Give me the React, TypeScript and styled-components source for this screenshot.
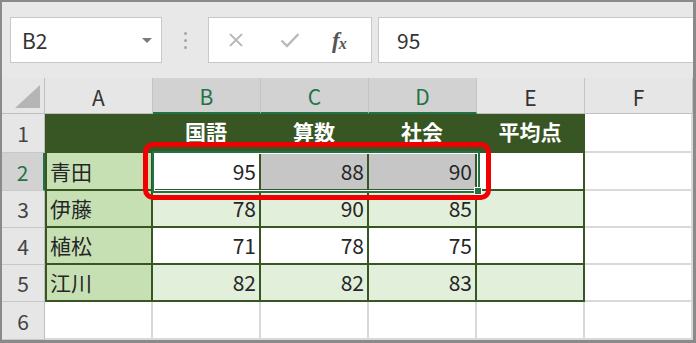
import React from "react";
import styled, { createGlobalStyle } from "styled-components";

const Global = createGlobalStyle`
  html, body { margin: 0; padding: 0; background: #ffffff; }
  * { box-sizing: border-box; }
`;

const FONT = `"Noto Sans CJK JP", "Noto Sans", "Liberation Sans", sans-serif`;
const DARK = "#375623";
const LIGHT_A = "#c6e0b4";
const BAND = "#e2efda";
const SEL_GREEN = "#217346";
const HEAD_BG = "#e6e6e6";
const HEAD_SEL = "#d2d2d2";
const GRID = "#d9d9d9";

const Frame = styled.div`
  width: 696px;
  height: 343px;
  border-style: solid;
  border-color: #8a8a8a;
  border-width: 2px 3px 3px 2px;
  display: flex;
  flex-direction: column;
  overflow: hidden;
  background: #ffffff;
  font-family: ${FONT};
`;

const Toolbar = styled.div`
  height: 76px;
  flex: none;
  display: flex;
  align-items: center;
  padding-left: 8px;
  background: #e8e8e8;
`;

const NameBox = styled.div`
  width: 152px;
  height: 46px;
  background: #fff;
  border: 1px solid #c8c8c8;
  display: flex;
  align-items: center;
  justify-content: space-between;
  padding: 0 9px 0 11px;
  font-size: 21px;
  color: #333;
`;

const DropArrow = styled.span`
  width: 0;
  height: 0;
  border-left: 5px solid transparent;
  border-right: 5px solid transparent;
  border-top: 5px solid #7a7a7a;
`;

const Dots = styled.div`
  display: flex;
  flex-direction: column;
  gap: 4px;
  margin: 0 21px 0 22px;
  span {
    width: 3px;
    height: 3px;
    border-radius: 50%;
    background: #a6a6a6;
  }
`;

const FuncBox = styled.div`
  width: 164px;
  height: 46px;
  background: #fff;
  border: 1px solid #c8c8c8;
  display: flex;
  align-items: center;
  padding-left: 19px;
`;

const IconSlot = styled.div<{ $w: number }>`
  width: ${(p) => p.$w}px;
  display: flex;
  align-items: center;
  justify-content: flex-start;
`;

const Fx = styled.span`
  font-family: "Liberation Serif", "DejaVu Serif", serif;
  font-style: italic;
  font-weight: bold;
  font-size: 23px;
  line-height: 1;
  color: #555;
  letter-spacing: -1px;
  sub {
    font-size: 16px;
    vertical-align: -1px;
  }
`;

const FormulaInput = styled.div`
  flex: 1;
  height: 46px;
  margin-left: 6px;
  background: #fff;
  border: 1px solid #c8c8c8;
  border-right: none;
  display: flex;
  align-items: center;
  padding-left: 18px;
  font-size: 21px;
  color: #333;
`;

const Sheet = styled.div`
  position: relative;
  flex: 1;
  display: grid;
  grid-template-columns: 43px repeat(6, 108px);
  grid-template-rows: 36px 39px 38px 37px 37px 37px 38px;
`;

const Corner = styled.div`
  background: ${HEAD_BG};
  border-right: 1px solid #bfbfbf;
  border-bottom: 1px solid #bfbfbf;
  position: relative;
  svg { position: absolute; left: 0; top: 0; }
`;

const ColHead = styled.div<{ $sel?: boolean }>`
  background: ${(p) => (p.$sel ? HEAD_SEL : HEAD_BG)};
  color: ${(p) => (p.$sel ? SEL_GREEN : "#333")};
  border-right: 1px solid #c4c4c4;
  border-bottom: ${(p) => (p.$sel ? `2px solid ${SEL_GREEN}` : "1px solid #bfbfbf")};
  display: flex;
  align-items: center;
  justify-content: center;
  font-size: 21px;
  padding-top: 2px;
`;

const RowHead = styled.div<{ $sel?: boolean }>`
  background: ${(p) => (p.$sel ? HEAD_SEL : HEAD_BG)};
  color: ${(p) => (p.$sel ? SEL_GREEN : "#444")};
  border-right: ${(p) => (p.$sel ? `2px solid ${SEL_GREEN}` : "1px solid #bfbfbf")};
  border-bottom: 1px solid #c8c8c8;
  display: flex;
  align-items: center;
  justify-content: center;
  font-size: 21px;
`;

type CellProps = {
  $bg?: string;
  $align?: "left" | "right" | "center";
  $table?: boolean;
  $leftEdge?: boolean;
  $head?: boolean;
};

const Cell = styled.div<CellProps>`
  background: ${(p) => p.$bg || "#fff"};
  border-right: 2px solid ${(p) => (p.$table ? DARK : GRID)};
  border-bottom: 2px solid ${(p) => (p.$table ? DARK : GRID)};
  border-left: ${(p) => (p.$leftEdge ? `2px solid ${DARK}` : "none")};
  display: flex;
  align-items: center;
  justify-content: ${(p) =>
    p.$align === "right" ? "flex-end" : p.$align === "center" ? "center" : "flex-start"};
  padding: ${(p) => (p.$head ? "0 3px 2px 3px" : "0 3px")};
  font-size: 21px;
  line-height: 1;
  color: ${(p) => (p.$head ? "#fff" : "#262626")};
  font-weight: ${(p) => (p.$head ? 700 : 400)};
`;

const Selection = styled.div`
  position: absolute;
  left: 150px;
  top: 73px;
  width: 328px;
  height: 42px;
  border: 2px solid ${SEL_GREEN};
  box-shadow: inset 0 0 0 1px #fff;
  pointer-events: none;
`;

const FillHandle = styled.div`
  position: absolute;
  right: -4px;
  bottom: -4px;
  width: 8px;
  height: 8px;
  background: ${SEL_GREEN};
  border: 1px solid #fff;
`;

const Callout = styled.div`
  position: absolute;
  left: 141px;
  top: 64px;
  width: 348px;
  height: 58px;
  border: 5px solid #f00000;
  border-radius: 10px;
  pointer-events: none;
`;

const cols = ["A", "B", "C", "D", "E", "F"];
const heads = ["", "国語", "算数", "社会", "平均点"];
const data: [string, number, number, number][] = [
  ["青田", 95, 88, 90],
  ["伊藤", 78, 90, 85],
  ["植松", 71, 78, 75],
  ["江川", 82, 82, 83],
];

export default function App() {
  return (
    <>
      <Global />
      <Frame>
        <Toolbar>
          <NameBox>
            <span>B2</span>
            <DropArrow />
          </NameBox>
          <Dots>
            <span />
            <span />
            <span />
          </Dots>
          <FuncBox>
            <IconSlot $w={52}>
              <svg width="16" height="15" viewBox="0 0 16 15">
                <path d="M2 1 L14 13 M14 1 L2 13" stroke="#b9b9b9" strokeWidth="1.8" fill="none" />
              </svg>
            </IconSlot>
            <IconSlot $w={52}>
              <svg width="20" height="16" viewBox="0 0 20 16">
                <path d="M1.5 8.5 L7 14 L18.5 2" stroke="#b9b9b9" strokeWidth="2.4" fill="none" />
              </svg>
            </IconSlot>
            <IconSlot $w={30}>
              <Fx>
                f<sub>x</sub>
              </Fx>
            </IconSlot>
          </FuncBox>
          <FormulaInput>95</FormulaInput>
        </Toolbar>
        <Sheet>
          <Corner>
            <svg width="43" height="36" viewBox="0 0 43 36">
              <polygon points="13,30 38,30 38,7" fill="#b5b5b5" />
            </svg>
          </Corner>
          {cols.map((c, i) => (
            <ColHead key={c} $sel={i >= 1 && i <= 3}>
              {c}
            </ColHead>
          ))}

          <RowHead>1</RowHead>
          {heads.map((h, i) => (
            <Cell key={i} $bg={DARK} $table $head $align="center" $leftEdge={i === 0}>
              {h}
            </Cell>
          ))}
          <Cell />

          {data.map((r, ri) => {
            const band = ri % 2 === 1 ? BAND : "#fff";
            const selRow = ri === 0;
            return (
              <React.Fragment key={ri}>
                <RowHead $sel={selRow}>{ri + 2}</RowHead>
                <Cell $bg={LIGHT_A} $table $leftEdge>
                  {r[0]}
                </Cell>
                {[r[1], r[2], r[3]].map((v, ci) => (
                  <Cell
                    key={ci}
                    $table
                    $align="right"
                    $bg={selRow ? (ci === 0 ? "#fff" : "#c6c6c6") : band}
                  >
                    {v}
                  </Cell>
                ))}
                <Cell $table $bg={band} />
                <Cell />
              </React.Fragment>
            );
          })}

          <RowHead>6</RowHead>
          {cols.map((c) => (
            <Cell key={c} />
          ))}

          <Selection>
            <FillHandle />
          </Selection>
          <Callout />
        </Sheet>
      </Frame>
    </>
  );
}
